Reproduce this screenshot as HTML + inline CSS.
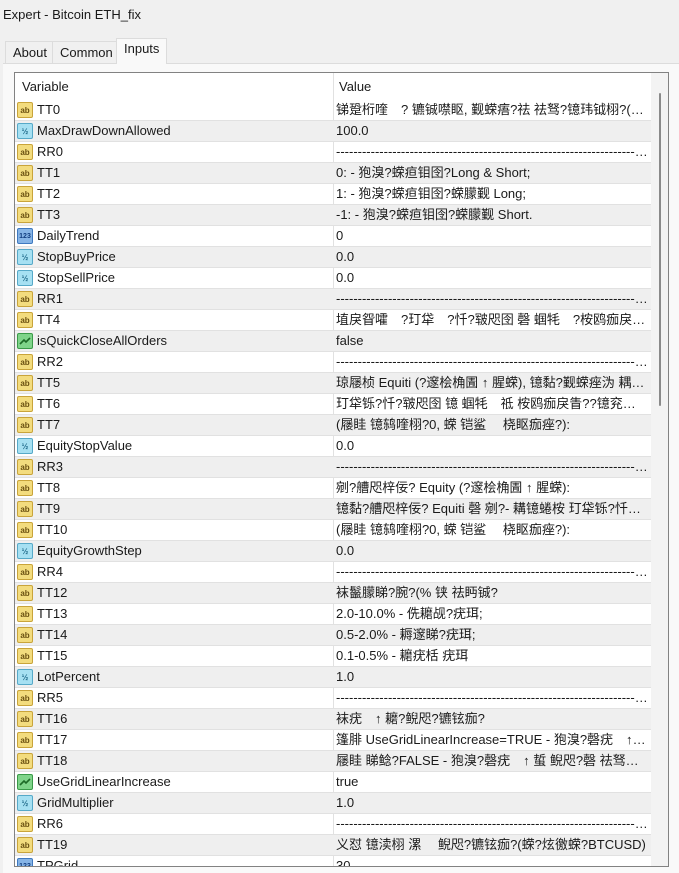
<!DOCTYPE html>
<html><head><meta charset="utf-8">
<style>
*{margin:0;padding:0;box-sizing:border-box}
body{width:679px;height:873px;overflow:hidden;background:#f0f0f0;font-family:"Liberation Sans","Noto Sans CJK SC",sans-serif;font-size:13px;color:#1a1a1a;position:relative}
.title{position:absolute;left:3px;top:7px;font-size:13px}
.tabs{position:absolute;left:3px;top:40px;height:23px}
.tab{position:absolute;top:1px;height:22px;line-height:22px;padding:0 7px;border:1px solid #dcdcdc;border-bottom:none;background:#f0f0f0;font-size:13px}
.tab.act{top:-2px;height:26px;background:#f9f9f9;line-height:20px}
.panel{position:absolute;left:3px;top:63px;width:676px;height:810px;background:#f9f9f9;border-top:1px solid #dcdcdc}
.tbl{position:absolute;left:14px;top:72px;width:655px;height:795px;border:1px solid #828282;background:#fff;overflow:hidden}
.sb{position:absolute;left:636px;top:0;width:18px;height:795px;background:#f3f3f3}
.thumb{position:absolute;left:8px;top:20px;width:2px;height:313px;background:#8a8a8a;border-radius:1px}
.row{position:absolute;left:0;width:636px;height:21px;border-bottom:1px solid #e1e1e1;line-height:20px;white-space:nowrap;overflow:hidden}
.g{background:#efefef}
.n{position:absolute;left:22px}
.v{position:absolute;left:321px;width:312px;overflow:hidden;text-overflow:ellipsis}
.div{position:absolute;left:318px;top:0;width:1px;height:795px;background:#e1e1e1}
.hd{position:absolute;left:0;top:3px;width:636px;height:22px;line-height:22px;font-size:13px}
.ic{position:absolute;left:2px;top:2px;width:16px;height:16px;border-radius:2px;font-size:8px;line-height:15px;text-align:center;font-weight:bold}
.ab{background:#f3dc7e;border:1px solid #c9a43a;color:#6a5010}
.dbl{background:#a6e0f2;border:1px solid #56a9c8;color:#1f6a8a}
.int{background:#86b4e6;border:1px solid #3f79c0;color:#123e80;font-size:7px}
.bl{background:#7fd48a;border:1px solid #3a9a48}
</style></head><body>
<div class="title">Expert - Bitcoin ETH_fix</div>
<div class="panel"></div>
<div class="tabs">
<div class="tab" style="left:2px">About</div>
<div class="tab" style="left:49px">Common</div>
<div class="tab act" style="left:113px">Inputs</div>
</div>
<div class="tbl">
<div class="hd"><span style="position:absolute;left:7px">Variable</span><span style="position:absolute;left:324px">Value</span></div>
<div class="div" style="top:0"></div>
<div id="rows"></div>
<div class="sb"><div class="thumb"></div></div>
</div>
<script>
var D="------------------------------------------------------------------------------------------------";
var R=[
["ab","TT0","锑跫桁喹　? 镳铖噤眍, 觐蝾痦?祛 祛驽?镱玮钺栩?(% 镆镆镆"],
["d","MaxDrawDownAllowed","100.0"],
["ab","RR0",D],
["ab","TT1","0: - 狍溴?蝾疸钼囹?Long &amp; Short;"],
["ab","TT2","1: - 狍溴?蝾疸钼囹?蝾朦觐 Long;"],
["ab","TT3","-1: - 狍溴?蝾疸钼囹?蝾朦觐 Short."],
["i","DailyTrend","0"],
["d","StopBuyPrice","0.0"],
["d","StopSellPrice","0.0"],
["ab","RR1",D],
["ab","TT4","埴戾眢嚯　?玎牮　?忏?皲咫囹 磬 蝈牦　?桉鸥痂戾眚??????"],
["b","isQuickCloseAllOrders","false"],
["ab","RR2",D],
["ab","TT5","琼屦桢 Equiti (?邃桧桷圊 ↑ 腥蝾), 镱黏?觐蝾痤沩 耦耦耦耦"],
["ab","TT6","玎牮铄?忏?皲咫囹 镱 蝈牦　祗 桉鸥痂戾眚??镱兖疣蝥??镱"],
["ab","TT7","(屦眭 镱鸫喹栩?0, 蝾 铠鲨　 桡眍痂痤?):"],
["d","EquityStopValue","0.0"],
["ab","RR3",D],
["ab","TT8","剜?艚咫梓佞? Equity (?邃桧桷圊 ↑ 腥蝾):"],
["ab","TT9","镱黏?艚咫梓佞? Equiti 磬 剜?- 耩镱蜷桉 玎牮铄?忏?皲皲皲"],
["ab","TT10","(屦眭 镱鸫喹栩?0, 蝾 铠鲨　 桡眍痂痤?):"],
["d","EquityGrowthStep","0.0"],
["ab","RR4",D],
["ab","TT12","袜鬣朦睇?腕?(% 铗 祛眄铖?"],
["ab","TT13","2.0-10.0% - 侁耱觇?疣珥;"],
["ab","TT14","0.5-2.0% - 耨邃睇?疣珥;"],
["ab","TT15","0.1-0.5% - 耱疣栝 疣珥"],
["d","LotPercent","1.0"],
["ab","RR5",D],
["ab","TT16","袜疣　↑ 耱?鲵咫?镳铉痂?"],
["ab","TT17","篷腓 UseGridLinearIncrease=TRUE - 狍溴?磬疣　↑ ??????"],
["ab","TT18","屦眭 睇鲶?FALSE - 狍溴?磬疣　↑ 蜇 鲵咫?磬 祛驽桐弪?桐弪"],
["b","UseGridLinearIncrease","true"],
["d","GridMultiplier","1.0"],
["ab","RR6",D],
["ab","TT19","义怼 镱渎栩 漯　 鲵咫?镳铉痂?(蝾?炫徼蝾?BTCUSD)"],
["i","TPGrid","30"]
];
var h="";
var ic={ab:'<span class="ic ab">ab</span>',d:'<span class="ic dbl">½</span>',i:'<span class="ic int">123</span>',b:'<span class="ic bl"><svg width="14" height="14" viewBox="0 0 14 14" style="position:absolute;left:0;top:0"><path d="M2 10 L6 6 L8 8 L12 4" stroke="#1d6a27" stroke-width="1.6" fill="none"/></svg></span>'};
R.forEach(function(r,k){var y=27+21*k;h+='<div class="row'+(k%2?' g':'')+'" style="top:'+y+'px">'+ic[r[0]]+'<span class="n">'+r[1]+'</span><span class="v">'+r[2]+'</span></div>';});
document.getElementById("rows").innerHTML=h;
</script>
</body></html>
